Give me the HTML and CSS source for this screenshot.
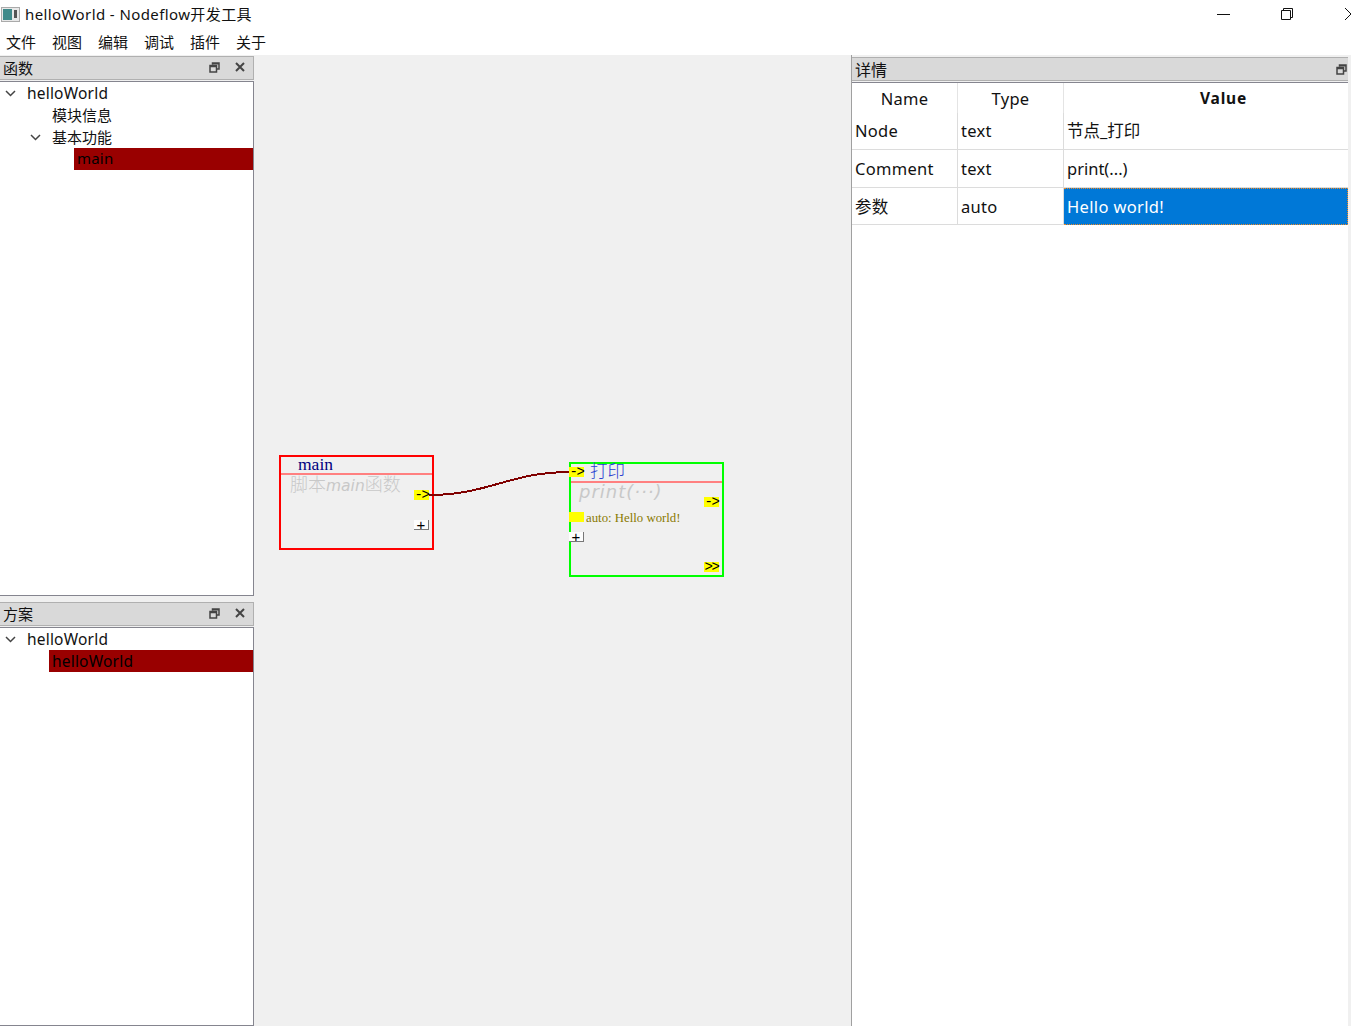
FILE: index.html
```html
<!DOCTYPE html>
<html lang="zh">
<head>
<meta charset="utf-8">
<title>helloWorld - Nodeflow开发工具</title>
<link rel="stylesheet" href="styles.css">
</head>
<body>
<div class="app">
  <header class="titlebar">
    <svg class="appicon" width="19" height="15" viewBox="0 0 19 15"><rect x="0.5" y="0.5" width="18" height="14" fill="#e8e8e8" stroke="#aaa"/><rect x="2" y="2" width="9" height="11" fill="#3f8a8a"/><rect x="13" y="3" width="3" height="8" fill="#555"/></svg>
    <span class="titletext">helloWorld - Nodeflow开发工具</span>
    <div class="winbtns">
      <svg class="winbtn min" width="14" height="14" viewBox="0 0 14 14"><path d="M0 7.5H13" stroke="#111" fill="none"/></svg>
      <svg class="winbtn max" width="14" height="14" viewBox="0 0 14 14"><path d="M1.5 3.5H10.5V12.5H1.5ZM3.5 3.5V1.5H12.5V10.5H10.5" stroke="#111" fill="none"/></svg>
      <svg class="winbtn close" width="6" height="14" viewBox="0 0 6 14"><path d="M0 1L6 7L0 13" stroke="#111" fill="none"/></svg>
    </div>
  </header>
  <nav class="menubar">
    <span>文件</span><span>视图</span><span>编辑</span><span>调试</span><span>插件</span><span>关于</span>
  </nav>
  <main class="workspace">
    <aside class="leftcol">
      <section class="dock dock-top">
        <div class="docktitle"><span class="docklabel">函数</span>
          <svg class="dockicon" width="11" height="11" viewBox="0 0 11 11"><path d="M3.5 2.5V1H10V7H8M1 3.5H7.5V10H1Z" fill="none" stroke="#444" stroke-width="1.5"/><path d="M1 4.5H7.5M3.5 1.8H10" stroke="#444" stroke-width="1.5"/></svg>
          <svg class="dockicon x" width="10" height="10" viewBox="0 0 10 10"><path d="M1 1L9 9M9 1L1 9" stroke="#444" stroke-width="2"/></svg>
        </div>
        <div class="tree">
          <div class="row"><svg class="chev" width="11" height="7" viewBox="0 0 11 7"><path d="M1 1L5.5 5.5L10 1" fill="none" stroke="#444" stroke-width="1.5"/></svg><span class="lbl l0">helloWorld</span></div>
          <div class="row cjk"><span class="lbl l1">模块信息</span></div>
          <div class="row cjk"><svg class="chev c1" width="11" height="7" viewBox="0 0 11 7"><path d="M1 1L5.5 5.5L10 1" fill="none" stroke="#444" stroke-width="1.5"/></svg><span class="lbl l1 after">基本功能</span></div>
          <div class="row sel s2 small"><span class="lbl">main</span></div>
        </div>
      </section>
      <section class="dock dock-bottom">
        <div class="docktitle"><span class="docklabel">方案</span>
          <svg class="dockicon" width="11" height="11" viewBox="0 0 11 11"><path d="M3.5 2.5V1H10V7H8M1 3.5H7.5V10H1Z" fill="none" stroke="#444" stroke-width="1.5"/><path d="M1 4.5H7.5M3.5 1.8H10" stroke="#444" stroke-width="1.5"/></svg>
          <svg class="dockicon x" width="10" height="10" viewBox="0 0 10 10"><path d="M1 1L9 9M9 1L1 9" stroke="#444" stroke-width="2"/></svg>
        </div>
        <div class="tree">
          <div class="row"><svg class="chev" width="11" height="7" viewBox="0 0 11 7"><path d="M1 1L5.5 5.5L10 1" fill="none" stroke="#444" stroke-width="1.5"/></svg><span class="lbl l0">helloWorld</span></div>
          <div class="row sel s1"><span class="lbl">helloWorld</span></div>
        </div>
      </section>
    </aside>

    <section class="canvas">
      <svg class="wire" width="597" height="971" viewBox="0 0 597 971"><path d="M175 440C235 440 255 417 316 417" fill="none" stroke="#800000" stroke-width="2" shape-rendering="crispEdges"/></svg>

      <div class="node node-main">
        <div class="ntitle">main</div>
        <div class="ncomment">脚本<i>main</i>函数</div>
        <span class="port flow p-main-out">-&gt;</span>
        <span class="add a-main">+</span>
      </div>

      <div class="node node-print">
        <div class="ntitle">打印</div>
        <div class="ncomment latin"><i>print(···)</i></div>
        <span class="port flow p-print-in">-&gt;</span>
        <span class="port flow p-print-out">-&gt;</span>
        <span class="port p-print-arg"></span>
        <span class="argtext">auto: Hello world!</span>
        <span class="add a-print">+</span>
        <span class="port flow p-print-next">&gt;&gt;</span>
      </div>
    </section>

    <aside class="rightcol">
      <div class="docktitle detail"><span class="docklabel">详情</span>
        <svg class="dockicon" width="11" height="11" viewBox="0 0 11 11"><path d="M3.5 2.5V1H10V7H8M1 3.5H7.5V10H1Z" fill="none" stroke="#444" stroke-width="1.5"/><path d="M1 4.5H7.5M3.5 1.8H10" stroke="#444" stroke-width="1.5"/></svg>
      </div>
      <div class="tablewrap">
        <div class="grid">
          <div class="hd">Name</div><div class="hd">Type</div><div class="hd bold">Value</div>
          <div class="cell first">Node</div><div class="cell first">text</div><div class="cell first last">节点_打印</div>
          <div class="cell r2">Comment</div><div class="cell r2">text</div><div class="cell r2 last">print(...)</div>
          <div class="cell r3">参数</div><div class="cell r3">auto</div><div class="cell r3 last active">Hello world!</div>
        </div>
      </div>
    </aside>
  </main>
</div>
</body>
</html>
```
FILE: styles.css
```css
* { box-sizing: border-box; }
html, body { margin: 0; height: 100%; }
body {
  font-family: "Noto Sans", "Noto Sans CJK SC", sans-serif;
  font-size: 15px;
  color: #111;
  background: #fff;
  overflow: hidden;
}
.app { width: 1351px; height: 1026px; display: flex; flex-direction: column; overflow: hidden; }

.titlebar { height: 28px; flex: none; display: flex; align-items: center; padding-left: 1px; background: #fff; }
.appicon { flex: none; }
.titletext { margin-left: 5px; font-size: 15px; letter-spacing: 0.4px; line-height: 28px; white-space: nowrap; }
.winbtns { margin-left: auto; display: flex; align-items: center; height: 28px; }
.winbtn { display: block; flex: none; }
.min { margin-right: 49px; }
.max { margin-right: 51px; }

.menubar { height: 27px; flex: none; display: flex; gap: 16px; padding: 2px 0 0 6px; align-items: center; background: #fff; font-size: 15px; line-height: 25px; }

.workspace { flex: 1; display: flex; min-height: 0; background: #f0f0f0; }

.leftcol { width: 254px; flex: none; display: flex; flex-direction: column; padding-top: 1px; }
.dock { display: flex; flex-direction: column; }
.dock-top { height: 540px; flex: none; }
.dock-bottom { flex: 1; margin-top: 6px; min-height: 0; }

.docktitle { height: 24px; flex: none; display: flex; align-items: center; background: #d9d9d9; border: 1px solid #b0b0b0; border-left: 0; padding-left: 3px; }
.docklabel { font-size: 15px; line-height: 22px; }
.dockicon { flex: none; margin-left: auto; margin-right: 15px; margin-bottom: 2px; }
.dockicon.x { margin-left: 0; margin-right: 8px; }

.tree { flex: 1; margin-top: 1px; background: #fff; border: 1px solid #85858f; border-left: 0; min-height: 0; }
.row { height: 22px; display: flex; align-items: center; position: relative; font-size: 15.5px; letter-spacing: 0.2px; line-height: 22px; white-space: nowrap; }
.row.cjk { font-size: 15px; letter-spacing: 0; }
.row.small { font-size: 15px; padding-bottom: 2px; }
.chev { flex: none; margin-left: 5px; }
.chev.c1 { margin-left: 30px; }
.lbl { display: block; }
.l0 { margin-left: 11px; }
.l1 { margin-left: 52px; }
.l1.after { margin-left: 11px; }
.sel { background: #990000; color: #000; }
.sel .lbl { padding-left: 3px; }
.s2 { margin-left: 74px; }
.s1 { margin-left: 49px; }

.canvas { flex: 1; position: relative; background: #f0f0f0; overflow: hidden; min-width: 0; }
.wire { position: absolute; left: 0; top: 0; z-index: 2; }

.node { position: absolute; font-family: "Liberation Serif", "Noto Serif CJK SC", "Noto Sans CJK SC", serif; }
.node-main { left: 25px; top: 400px; width: 155px; height: 95px; border: 2px solid #f00; }
.node-print { left: 315px; top: 407px; width: 155px; height: 115px; border: 2px solid #0f0; }
.ntitle { height: 18px; padding-left: 17px; line-height: 14px; font-size: 17.5px; color: #000080; border-bottom: 2px solid #ff8080; }
.node-print .ntitle { height: 19px; font-family: "Noto Sans CJK SC", sans-serif; font-weight: 300; color: #2a3fd0; padding-left: 19px; line-height: 11px; }
.ncomment { padding-left: 9px; font-family: "Noto Sans CJK SC", sans-serif; font-weight: 300; font-size: 18px; line-height: 17px; color: #c8c8c8; white-space: nowrap; }
.ncomment i { font-family: "DejaVu Sans", sans-serif; font-size: 15.5px; }
.ncomment.latin { line-height: 15px; padding-left: 8px; }
.ncomment.latin i { font-size: 18px; letter-spacing: 1px; }

.port { position: absolute; width: 15px; height: 10px; background: #ff0; color: #000; font-family: "Liberation Mono", monospace; font-size: 14px; line-height: 11px; text-align: center; letter-spacing: -1.5px; z-index: 3; }
.p-main-out { left: 133px; top: 33px; }
.p-print-in { left: -2px; top: 3px; }
.p-print-out { left: 133px; top: 33px; }
.p-print-arg { left: -2px; top: 48px; }
.p-print-next { left: 133px; top: 98px; }
.argtext { position: absolute; left: 15px; top: 46px; font-size: 12.8px; line-height: 16px; color: #8a7a00; white-space: nowrap; }
.add { position: absolute; width: 15px; height: 10px; background: #fdfdfd; border-right: 1px solid #777; border-bottom: 1px solid #777; color: #000; font-family: "Liberation Sans", sans-serif; font-size: 15px; line-height: 9px; text-align: center; z-index: 3; }
.a-main { left: 133px; top: 63px; }
.a-print { left: -2px; top: 68px; }

.rightcol { width: 500px; flex: none; display: flex; flex-direction: column; padding: 2px 3px 0 0; background: #f0f0f0; border-left: 1px solid #a0a0a0; }
.docktitle.detail { height: 24px; border-right: 0; padding-left: 3px; }
.docktitle.detail .docklabel { font-size: 16px; line-height: 24px; padding-top: 2px; }
.docktitle.detail .dockicon { margin-right: 1px; margin-bottom: 0; }
.tablewrap { flex: 1; margin-top: 1px; background: #fff; border-top: 1px solid #85858f; min-height: 0; }
.grid { display: grid; grid-template-columns: 106px 106px 1fr; grid-template-rows: 30px 37px 38px 37px; font-size: 16.5px; letter-spacing: 0.3px; }
.hd { display: flex; align-items: center; justify-content: center; border-right: 1px solid #e4e4e4; padding-top: 1px; }
.hd.bold { font-weight: 700; font-size: 15.5px; letter-spacing: 0.8px; padding: 0 0 1px 35px; border-right: 0; }
.cell { display: flex; align-items: center; padding-left: 3px; border-right: 1px solid #dcdcdc; border-bottom: 1px solid #dcdcdc; }
.cell.first { padding-bottom: 2px; }
.cell.last { border-right: 0; letter-spacing: 0; }
.cell.active { background: #0078d7; color: #fff; padding-left: 3px; letter-spacing: 0.35px; border: 1px dotted #f08a24; border-left: 0; }
```
